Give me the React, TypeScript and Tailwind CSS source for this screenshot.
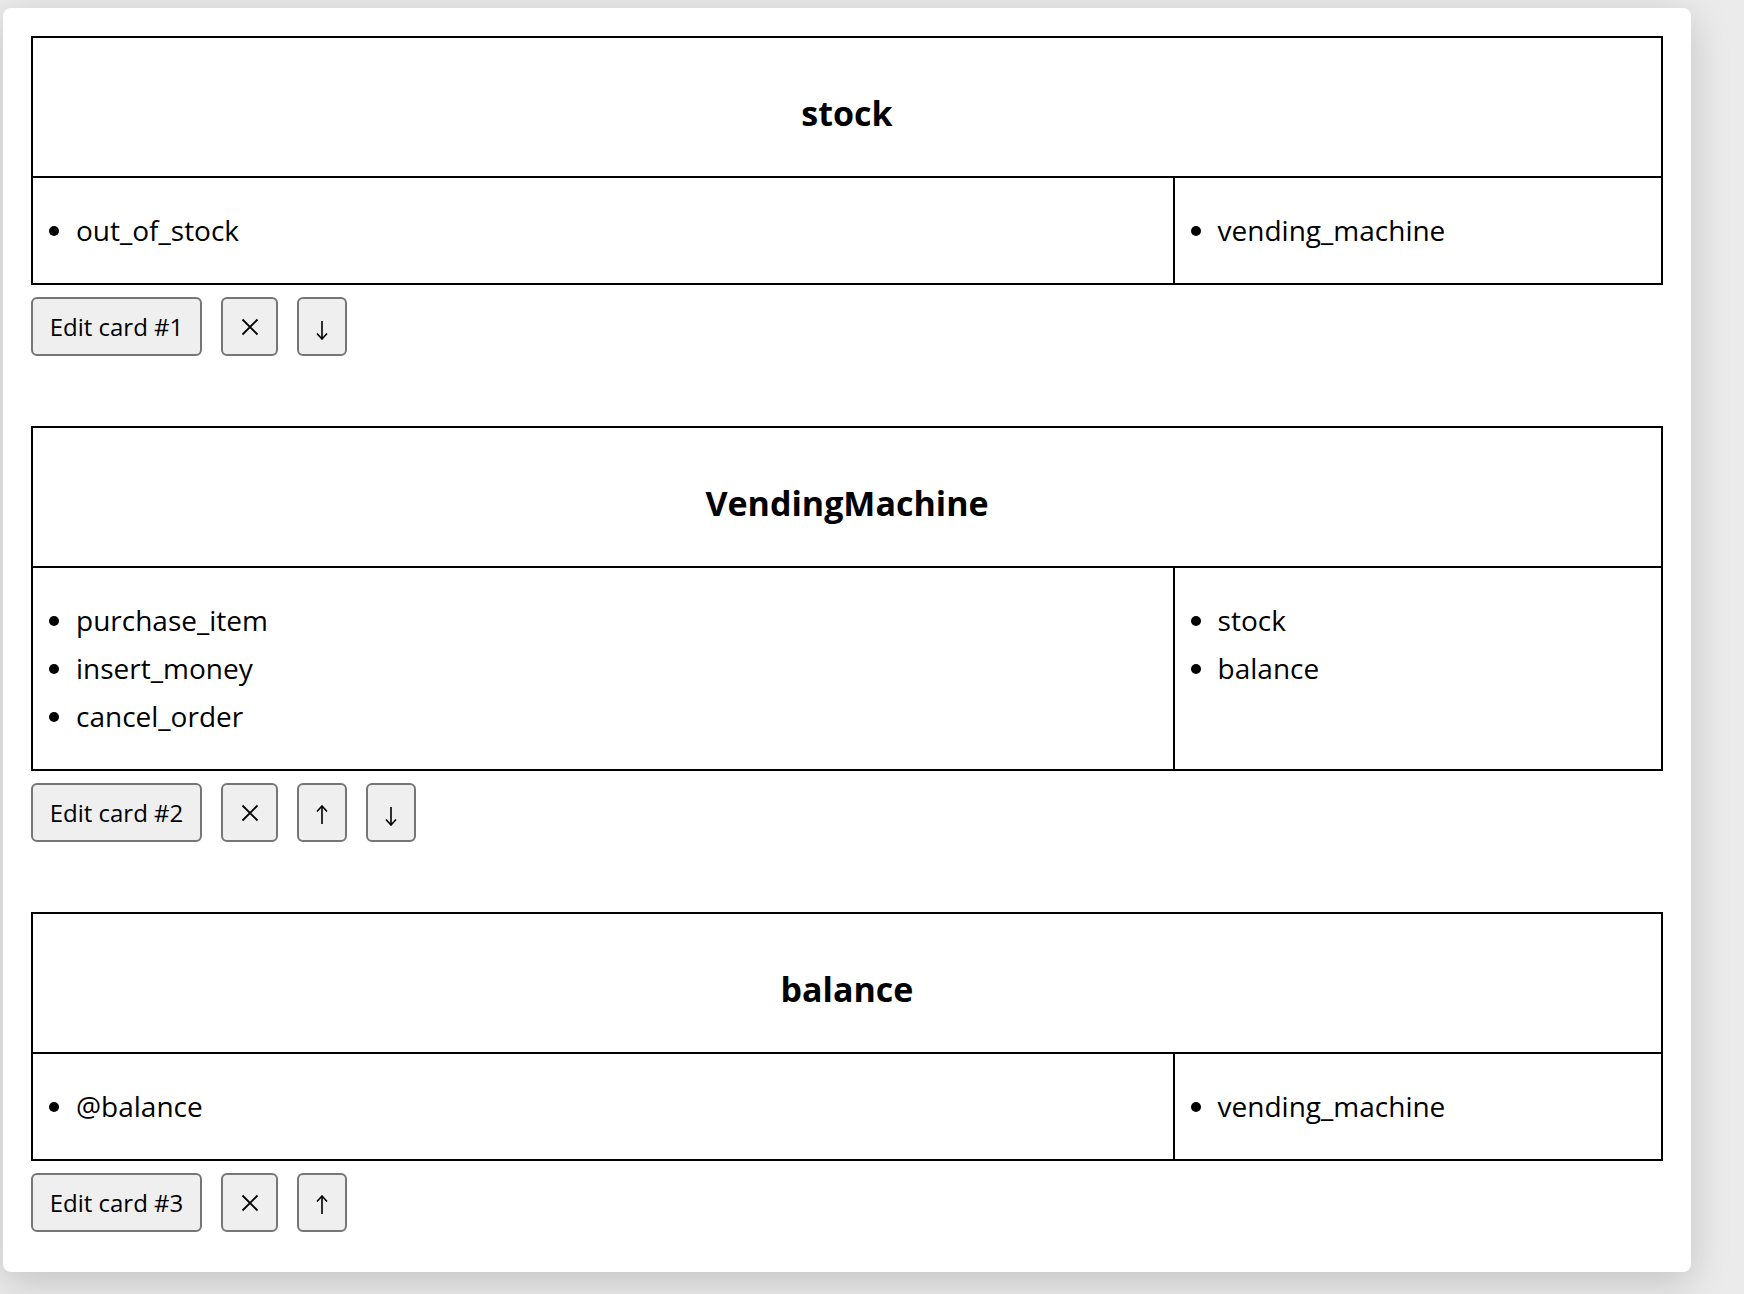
import { Fragment } from "react";

type Card = {
  title: string;
  left: string[];
  right: string[];
};

const cards: Card[] = [
  { title: "stock", left: ["out_of_stock"], right: ["vending_machine"] },
  {
    title: "VendingMachine",
    left: ["purchase_item", "insert_money", "cancel_order"],
    right: ["stock", "balance"],
  },
  { title: "balance", left: ["@balance"], right: ["vending_machine"] },
];

const CloseIcon = () => (
  <svg width="18" height="18" viewBox="0 0 18 18" fill="none" stroke="black" strokeWidth="1.8">
    <path d="M1.5 1.5 L16.5 16.5 M16.5 1.5 L1.5 16.5" />
  </svg>
);

const ArrowIcon = ({ up }: { up?: boolean }) => (
  <svg
    width="12"
    height="19"
    viewBox="0 0 12 19"
    fill="none"
    stroke="black"
    strokeWidth="1.6"
    className={up ? "mt-[4px] rotate-180" : "mt-[7px]"}
  >
    <path d="M6 0 L6 18 M1 12.5 L6 18 L11 12.5" />
  </svg>
);

const btn =
  "flex items-center justify-center h-[59px] rounded-[6px] border-2 border-[#767676] bg-[#efefef] text-black";

const ItemList = ({ items }: { items: string[] }) => (
  <ul className="list-disc pl-[43px] pt-[28px] pb-[29px] text-[28px] leading-[48px]">
    {items.map((item) => (
      <li key={item}>{item}</li>
    ))}
  </ul>
);

const CardBlock = ({ card, index, total }: { card: Card; index: number; total: number }) => (
  <div className={index < total - 1 ? "mb-[70px]" : ""}>
    <div className="border-2 border-black">
      {/* header height includes the 2px divider */}
      <div className="flex h-[140px] items-center justify-center border-b-2 border-black pt-[13px]">
        <h2 className="text-[34px] font-bold text-black">{card.title}</h2>
      </div>
      <div className="grid grid-cols-[7fr_3fr]">
        <ItemList items={card.left} />
        <div className="border-l-2 border-black">
          <ItemList items={card.right} />
        </div>
      </div>
    </div>
    <div className="mt-[12px] flex gap-[19px]">
      <button className={`${btn} w-[171px] text-[24px]`}>Edit card #{index + 1}</button>
      <button className={`${btn} w-[57px]`}>
        <CloseIcon />
      </button>
      {index > 0 && (
        <button className={`${btn} w-[50px]`}>
          <ArrowIcon up />
        </button>
      )}
      {index < total - 1 && (
        <button className={`${btn} w-[50px]`}>
          <ArrowIcon />
        </button>
      )}
    </div>
  </div>
);

export default function App() {
  return (
    <div className="min-h-screen bg-[#ebebeb] pt-[8px] pl-[3px] font-['Open_Sans',sans-serif] text-black">
      <div className="w-[1688px] rounded-[8px] bg-white px-[28px] pt-[28px] pb-[40px] shadow-[0_10px_40px_rgba(0,0,0,0.18)]">
        {cards.map((card, i) => (
          <Fragment key={card.title}>
            <CardBlock card={card} index={i} total={cards.length} />
          </Fragment>
        ))}
      </div>
    </div>
  );
}
